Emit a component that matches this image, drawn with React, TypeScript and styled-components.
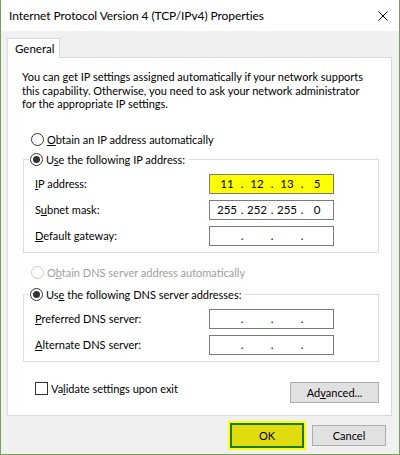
import styled, { createGlobalStyle } from "styled-components"

const GlobalStyle = createGlobalStyle`
  html, body {
    margin: 0;
    padding: 0;
    background: #ffffff;
  }
  body {
    font-family: Lato, "Liberation Sans", sans-serif;
    font-size: 11px;
    color: #000000;
  }
`

type Ip = [string, string, string, string]

interface FieldProps {
  label: string;
  keyIndex: number;
  value: Ip;
  highlight?: boolean;
}

function Mnemonic({ text, index }: { text: string; index: number }) {
  return (
    <>
      {text.slice(0, index)}
      <Key>{text.charAt(index)}</Key>
      {text.slice(index + 1)}
    </>
  );
}

function IpField({ label, keyIndex, value, highlight }: FieldProps) {
  return (
    <FieldRow>
      <FieldLabel><Mnemonic text={label} index={keyIndex} /></FieldLabel>
      <IpBox $highlight={highlight}>
        {value.map((part, i) => (
          <Segment key={i}>
            <Octet>{part}</Octet>
            {i < 3 && <Dot>.</Dot>}
          </Segment>
        ))}
      </IpBox>
    </FieldRow>
  );
}

function Radio({ text, keyIndex, checked, disabled }: { text: string; keyIndex: number; checked?: boolean; disabled?: boolean }) {
  return (
    <RadioRow $disabled={disabled}>
      <Circle $checked={checked} $disabled={disabled} />
      <span><Mnemonic text={text} index={keyIndex} /></span>
    </RadioRow>
  );
}

const empty: Ip = ['', '', '', ''];

export default function App() {
  return (
    <Window>
      <GlobalStyle />
      <TitleBar>
        <Title>Internet Protocol Version 4 (TCP/IPv4) Properties</Title>
        <CloseButton>
          <svg width="10" height="10" viewBox="0 0 10 10">
            <path d="M0.5 0.5 L9.5 9.5 M9.5 0.5 L0.5 9.5" stroke="#000" strokeWidth="1" />
          </svg>
        </CloseButton>
      </TitleBar>
      <Body>
        <Tabs>
          <Tab>General</Tab>
        </Tabs>
        <Panel>
          <Intro>
            You can get IP settings assigned automatically if your network supports<br />
            this capability. Otherwise, you need to ask your network administrator<br />
            for the appropriate IP settings.
          </Intro>
          <LooseRadio>
            <Radio text="Obtain an IP address automatically" keyIndex={0} />
          </LooseRadio>
          <GroupBox $gap={4}>
            <Legend>
              <Radio text="Use the following IP address:" keyIndex={1} checked />
            </Legend>
            <IpField label="IP address:" keyIndex={0} value={['11', '12', '13', '5']} highlight />
            <IpField label="Subnet mask:" keyIndex={1} value={['255', '252', '255', '0']} />
            <IpField label="Default gateway:" keyIndex={0} value={empty} />
          </GroupBox>
          <LooseRadio $top={12}>
            <Radio text="Obtain DNS server address automatically" keyIndex={1} disabled />
          </LooseRadio>
          <GroupBox $gap={6}>
            <Legend>
              <Radio text="Use the following DNS server addresses:" keyIndex={2} checked />
            </Legend>
            <IpField label="Preferred DNS server:" keyIndex={0} value={empty} />
            <IpField label="Alternate DNS server:" keyIndex={0} value={empty} />
          </GroupBox>
          <BottomRow>
            <CheckRow>
              <CheckBox />
              <span><Mnemonic text="Validate settings upon exit" index={2} /></span>
            </CheckRow>
            <Button $width={89}><Mnemonic text="Advanced..." index={2} /></Button>
          </BottomRow>
        </Panel>
        <Footer>
          <DefaultButton>OK</DefaultButton>
          <Button $width={74}>Cancel</Button>
        </Footer>
      </Body>
    </Window>
  );
}

const Window = styled.div`
  box-sizing: border-box;
  width: 400px;
  height: 455px;
  display: flex;
  flex-direction: column;
  border: 1px solid #7a9f5a;
  border-top: 0;
  background: #f0f0f0;
`

const TitleBar = styled.div`
  display: flex;
  align-items: center;
  justify-content: space-between;
  height: 31px;
  flex-shrink: 0;
  background: #ffffff;
  padding-left: 8px;
`

const Title = styled.div`
  font-size: 12px;
  letter-spacing: -0.08px;
  color: #000000;
  margin-top: -1px;
`

const CloseButton = styled.div`
  display: flex;
  align-items: center;
  justify-content: center;
  width: 30px;
  height: 30px;
  margin-right: 1px;
`

const Body = styled.div`
  display: flex;
  flex-direction: column;
  padding: 7px 7px 0 6px;
  flex: 1;
`

const Tabs = styled.div`
  display: flex;
  height: 19px;
`

const Tab = styled.div`
  box-sizing: border-box;
  width: 53px;
  height: 20px;
  padding: 3px 0 0 7px;
  font-size: 11.5px;
  background: #ffffff;
  border: 1px solid #d9d9d9;
  border-bottom: 0;
  position: relative;
  z-index: 1;
`

const Panel = styled.div`
  display: flex;
  flex-direction: column;
  width: 385px;
  box-sizing: border-box;
  background: #ffffff;
  border: 1px solid #d9d9d9;
  padding: 12px 0 12px 0;
`

const Intro = styled.p`
  margin: 0 0 0 14px;
  line-height: 13.5px;
  white-space: nowrap;
`

const Key = styled.u`
  text-decoration: underline;
  text-underline-offset: 1px;
`

const LooseRadio = styled.div<{ $top?: number }>`
  margin: ${p => p.$top ?? 21}px 0 0 23px;
`

const RadioRow = styled.div<{ $disabled?: boolean }>`
  display: flex;
  align-items: center;
  height: 16px;
  gap: 3px;
  color: ${p => (p.$disabled ? '#a0a0a0' : '#000000')};
  white-space: nowrap;
`

const Circle = styled.span<{ $checked?: boolean; $disabled?: boolean }>`
  box-sizing: border-box;
  width: 13px;
  height: 13px;
  border-radius: 50%;
  border: 1px solid ${p => (p.$disabled ? '#cccccc' : '#333333')};
  background: #ffffff;
  display: flex;
  align-items: center;
  justify-content: center;
  flex-shrink: 0;
  &::after {
    content: '';
    display: ${p => (p.$checked ? 'block' : 'none')};
    width: 7px;
    height: 7px;
    border-radius: 50%;
    background: #333333;
  }
`

const GroupBox = styled.fieldset<{ $gap: number }>`
  box-sizing: border-box;
  width: 356px;
  margin: ${p => p.$gap}px 0 0 15px;
  padding: 6px 0 6px 11px;
  border: 1px solid #dcdcdc;
  min-inline-size: auto;
  display: flex;
  flex-direction: column;
  gap: 6px;
`

const Legend = styled.legend`
  padding: 0 4px 0 1px;
  margin-left: -6px;
  height: 16px;
`

const FieldRow = styled.div`
  display: flex;
  align-items: center;
  height: 20px;
`

const FieldLabel = styled.div`
  width: 174px;
`

const IpBox = styled.div<{ $highlight?: boolean }>`
  box-sizing: border-box;
  width: 125px;
  height: 20px;
  border: 1px solid #7a7a7a;
  background: ${p => (p.$highlight ? '#ffff00' : '#ffffff')};
  display: flex;
  align-items: center;
  padding-left: 4px;
  font-size: 11.5px;
`

const Segment = styled.div`
  display: flex;
`

const Octet = styled.span`
  width: 26px;
  text-align: center;
`

const Dot = styled.span`
  width: 4px;
  text-align: center;
`

const BottomRow = styled.div`
  display: flex;
  justify-content: space-between;
  align-items: flex-start;
  width: 356px;
  margin: 20px 0 0 15px;
  padding-left: 12px;
  box-sizing: border-box;
`

const CheckRow = styled.div`
  display: flex;
  align-items: center;
  gap: 3px;
  height: 13px;
  margin-top: 0;
`

const CheckBox = styled.span`
  box-sizing: border-box;
  width: 13px;
  height: 13px;
  border: 1px solid #333333;
  background: #ffffff;
`

const Button = styled.div<{ $width: number }>`
  box-sizing: border-box;
  width: ${p => p.$width}px;
  height: 21px;
  display: flex;
  align-items: center;
  justify-content: center;
  background: #e1e1e1;
  border: 1px solid #adadad;
`

const Footer = styled.div`
  display: flex;
  justify-content: flex-end;
  align-items: center;
  gap: 8px;
  flex: 1;
  padding: 1px 6px 0 0;
`

const DefaultButton = styled.div`
  box-sizing: border-box;
  width: 74px;
  height: 25px;
  display: flex;
  align-items: center;
  justify-content: center;
  background: #e0dc0e;
  border: 2px solid #1a7a1a;
  box-shadow: 0 0 0 2px #ffff00;
`
